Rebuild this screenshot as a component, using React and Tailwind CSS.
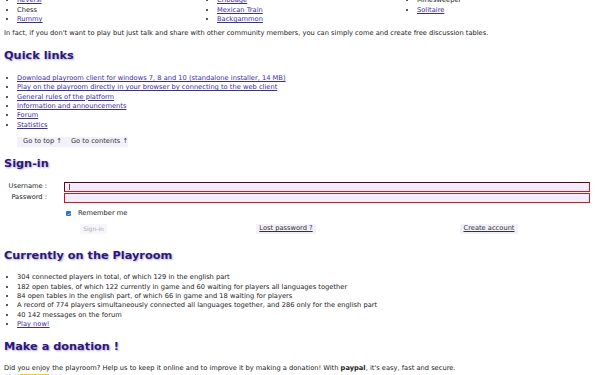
import React from "react";

const H = ({ children, className = "" }) => (
  <h2
    className={
      "font-bold text-[11.3px] leading-[14px] text-[#2b1a6e] px-[4px] [text-shadow:1px_1px_2px_#b3a3ec] " +
      className
    }
  >
    {children}
  </h2>
);

const A = ({ children }) => (
  <a href="#" className="text-[#3a2ca8] underline">
    {children}
  </a>
);

export default function App() {
  return (
    <div
      className="w-[600px] h-[375px] overflow-hidden bg-white text-[#222] text-[6.7px] leading-[9.4px]"
      style={{ fontFamily: '"DejaVu Sans", Verdana, sans-serif' }}
    >
      <div className="grid grid-cols-3 -mt-[4px]">
        <ul className="list-disc pl-[17px] leading-[9.5px]">
          <li><A>Reversi</A></li>
          <li>Chess</li>
          <li><A>Rummy</A></li>
        </ul>
        <ul className="list-disc pl-[17px] leading-[9.5px]">
          <li><A>Cribbage</A></li>
          <li><A>Mexican Train</A></li>
          <li><A>Backgammon</A></li>
        </ul>
        <ul className="list-disc pl-[17px] leading-[9.5px]">
          <li>Minesweeper</li>
          <li><A>Solitaire</A></li>
        </ul>
      </div>

      <p className="px-[4px] mt-[4px]">
        In fact, if you don't want to play but just talk and share with other community members, you can simply come and create free discussion tables.
      </p>

      <H className="mt-[11.5px]">Quick links</H>
      <ul className="list-disc pl-[17px] mt-[10.5px] leading-[9.35px]">
        <li><A>Download playroom client for windows 7, 8 and 10 (standalone installer, 14 MB)</A></li>
        <li><A>Play on the playroom directly in your browser by connecting to the web client</A></li>
        <li><A>General rules of the platform</A></li>
        <li><A>Information and announcements</A></li>
        <li><A>Forum</A></li>
        <li><A>Statistics</A></li>
      </ul>
      <div className="ml-[17px] mt-[7px] w-[111px] h-[10px] bg-[#f2f0fa] flex items-center gap-[9px] pl-[6px] text-[#333]">
        <span>Go to top ↑</span>
        <span>Go to contents ↑</span>
      </div>

      <H className="mt-[10px]">Sign-in</H>
      <div className="mt-[11px] grid grid-cols-[64px_1fr] pr-[10px] gap-y-[1px]">
        <div className="text-right pr-[17px] h-[10px] flex items-center justify-end">Username :</div>
        <div className="h-[10px] bg-[#f1ecff] border border-[#e01010] border-t-[#5a0a14] border-l-[#5a0a14] flex items-center pl-[4px]">
          <span className="w-px h-[6px] bg-[#555]" />
        </div>
        <div className="text-right pr-[17px] h-[10px] flex items-center justify-end">Password :</div>
        <div className="h-[10px] bg-[#f1ecff] border border-[#e01010]" />
      </div>
      <div className="flex items-center ml-[66px] mt-[6px] h-[10px]">
        <span className="w-[5px] h-[5px] bg-[#2f6fd8] rounded-[1px] flex items-center justify-center">
          <svg viewBox="0 0 10 10" className="w-[4px] h-[4px]">
            <path d="M2 5 L4 7 L8 3" stroke="white" strokeWidth="2" fill="none" />
          </svg>
        </span>
        <span className="ml-[7px]">Remember me</span>
      </div>
      <div className="flex items-center mt-[5px] h-[10px]">
        <span className="ml-[80px] w-[27px] h-[10px] bg-[#f7f6fb] text-[#aaa] flex items-center justify-center text-[6px]">Sign-in</span>
        <span className="ml-[149px] w-[60px] h-[10px] bg-[#f2f0fa] flex items-center justify-center underline text-[#333]">Lost password ?</span>
        <span className="ml-[144px] w-[58px] h-[10px] bg-[#f2f0fa] flex items-center justify-center underline text-[#333]">Create account</span>
      </div>

      <H className="mt-[15.5px]">Currently on the Playroom</H>
      <ul className="list-disc pl-[17px] mt-[10px] leading-[9.3px]">
        <li>304 connected players in total, of which 129 in the english part</li>
        <li>182 open tables, of which 122 currently in game and 60 waiting for players all languages together</li>
        <li>84 open tables in the english part, of which 66 in game and 18 waiting for players</li>
        <li>A record of 774 players simultaneously connected all languages together, and 286 only for the english part</li>
        <li>40 142 messages on the forum</li>
        <li><A>Play now!</A></li>
      </ul>

      <H className="mt-[10.5px]">Make a donation !</H>
      <p className="px-[4px] mt-[10px]">
        Did you enjoy the playroom? Help us to keep it online and to improve it by making a donation! With <b>paypal</b>, it's easy, fast and secure.
      </p>
      <div className="ml-[5px] w-[57px] h-[8px] bg-[#eeeef8] mt-[1px] pl-[13px]">
        <div className="w-[32px] h-[8px] bg-[#f5c542] rounded-t-[3px]" />
      </div>
    </div>
  );
}
